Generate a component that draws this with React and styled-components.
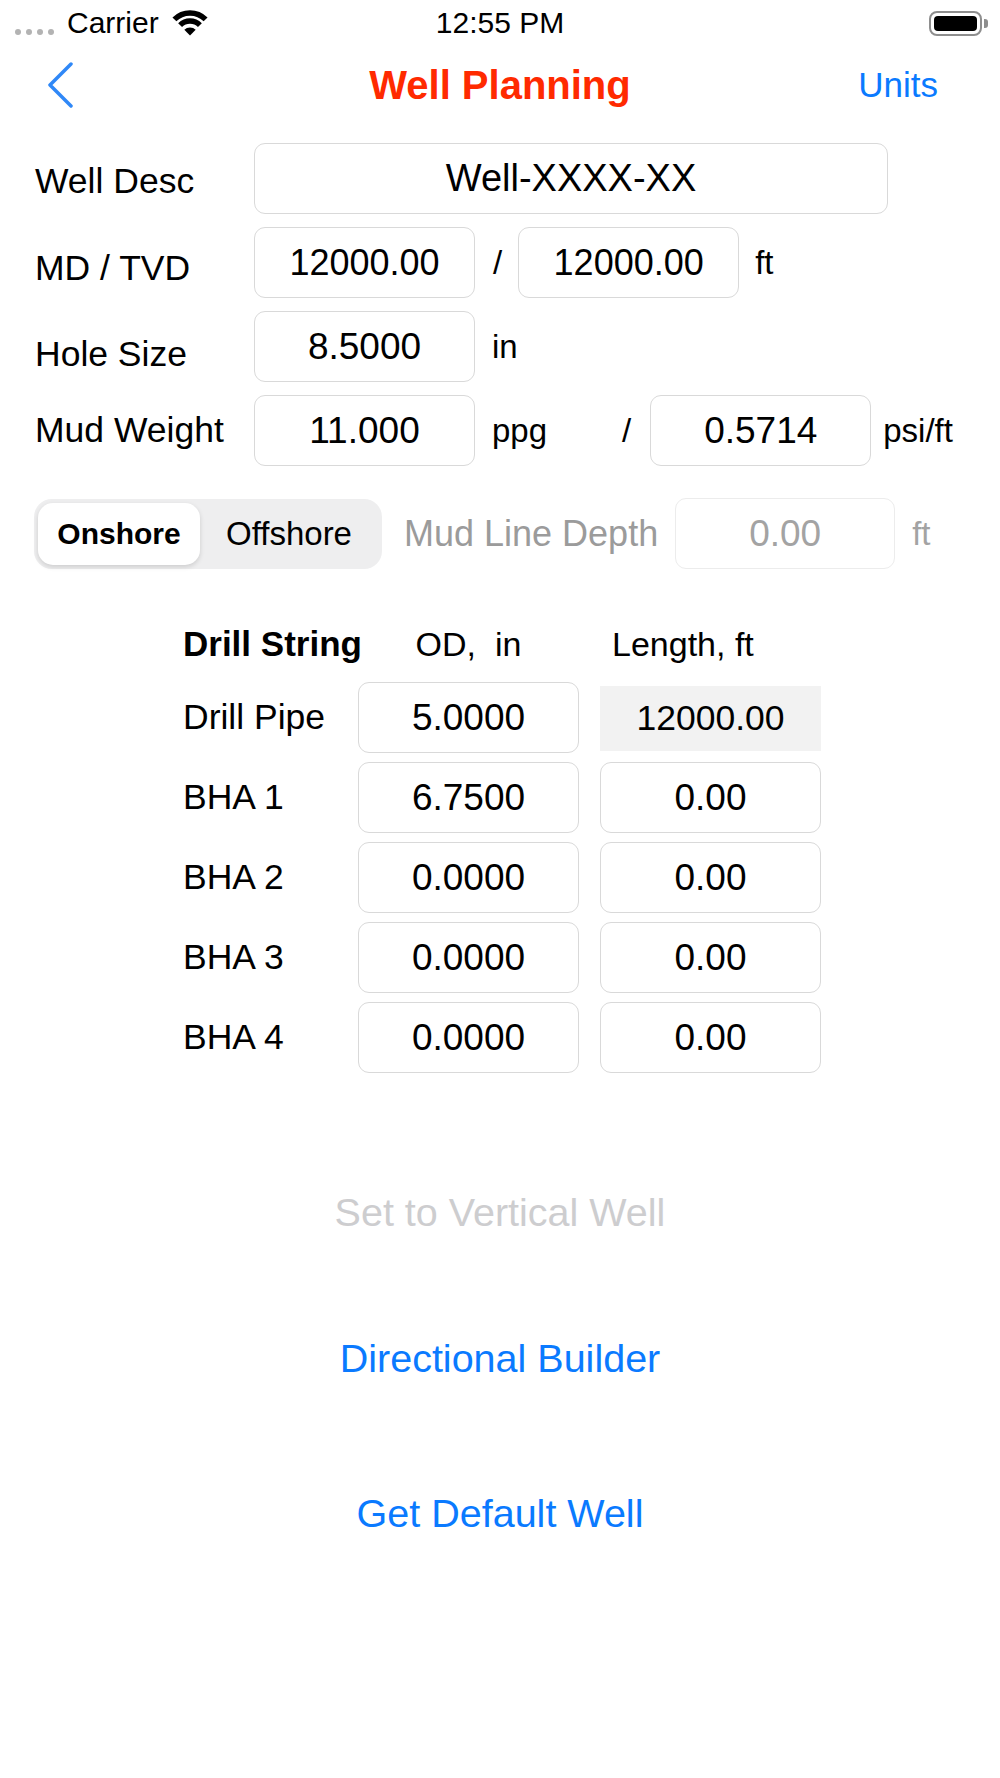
import React from "react";
import styled, { createGlobalStyle } from "styled-components";

const GlobalStyle = createGlobalStyle`
  html, body { margin: 0; padding: 0; background: #ffffff; }
  * { box-sizing: border-box; }
`;

const Page = styled.div`
  width: 1000px;
  min-height: 1778px;
  background: #ffffff;
  font-family: "Liberation Sans", Arial, Helvetica, sans-serif;
  color: #000000;
`;

/* ---------- status bar ---------- */
const StatusBar = styled.div`
  height: 46px;
  display: grid;
  grid-template-columns: 1fr auto 1fr;
  align-items: center;
`;

const StatusLeft = styled.div`
  display: flex;
  align-items: center;
  padding-left: 15px;
  height: 46px;
`;

const Dots = styled.div`
  display: flex;
  gap: 5px;
  align-self: flex-end;
  margin-bottom: 11px;
`;

const Dot = styled.span`
  width: 6px;
  height: 6px;
  border-radius: 50%;
  background: #b3b3b3;
`;

const Carrier = styled.span`
  font-size: 30px;
  margin-left: 13px;
  line-height: 46px;
`;

const WifiIcon = styled.svg`
  margin-left: 13px;
  width: 36px;
  height: 26px;
  display: block;
`;

const Clock = styled.span`
  font-size: 30px;
  line-height: 46px;
`;

const StatusRight = styled.div`
  display: flex;
  justify-content: flex-end;
  align-items: center;
  padding-right: 12px;
`;

const Battery = styled.div`
  width: 53px;
  height: 25px;
  border: 2.5px solid #8e8e8e;
  border-radius: 8px;
  padding: 3px;
  display: flex;
`;

const BatteryFill = styled.div`
  flex: 1;
  background: #000;
  border-radius: 4px;
`;

const BatteryNub = styled.div`
  width: 4px;
  height: 9px;
  margin-left: 2px;
  background: #8e8e8e;
  border-radius: 0 3px 3px 0;
`;

/* ---------- nav bar ---------- */
const NavBar = styled.div`
  height: 78px;
  display: grid;
  grid-template-columns: 1fr auto 1fr;
  align-items: center;
`;

const BackButton = styled.button`
  justify-self: start;
  margin-left: 46px;
  background: none;
  border: 0;
  padding: 0;
  display: flex;
  align-items: center;
`;

const Title = styled.h1`
  margin: 0;
  font-size: 40px;
  font-weight: 700;
  color: #ff2a00;
  line-height: 78px;
`;

const NavAction = styled.button`
  justify-self: end;
  margin-right: 62px;
  background: none;
  border: 0;
  padding: 0;
  font-family: inherit;
  font-size: 35px;
  color: #0a7aff;
  line-height: 78px;
`;

/* ---------- form ---------- */
const Form = styled.div`
  padding: 19px 0 0 35px;
  display: flex;
  flex-direction: column;
  gap: 13px;
`;

const Row = styled.div`
  display: flex;
  align-items: center;
  height: 71px;
`;

const Label = styled.span`
  width: 219px;
  flex: none;
  font-size: 35.5px;
  white-space: nowrap;
  padding-top: ${(p) => (p.$shift || 0) * 2}px;
`;

const Field = styled.div`
  flex: none;
  width: ${(p) => p.$w || 221}px;
  height: 71px;
  margin-left: ${(p) => p.$ml || 0}px;
  border: 1px solid ${(p) => (p.$muted ? "#ececec" : "#d9d9d9")};
  border-radius: 11px;
  background: #ffffff;
  display: flex;
  align-items: center;
  justify-content: center;
  font-size: ${(p) => p.$size || 37}px;
  color: ${(p) => (p.$muted ? "#a3a3a3" : "#000000")};
  white-space: nowrap;
`;

const Unit = styled.span`
  flex: none;
  font-size: ${(p) => p.$size || 33}px;
  margin-left: ${(p) => p.$ml || 0}px;
  color: ${(p) => (p.$muted ? "#a3a3a3" : "#000000")};
  white-space: nowrap;
`;

/* ---------- onshore / offshore ---------- */
const OptionsRow = styled.div`
  display: flex;
  align-items: center;
  height: 71px;
  margin-top: 32px;
  padding-left: 34px;
`;

const Segmented = styled.div`
  flex: none;
  width: 348px;
  height: 70px;
  padding: 4px;
  border-radius: 18px;
  background: #eeeeef;
  display: grid;
  grid-template-columns: 162px 1fr;
`;

const SegItem = styled.div`
  display: flex;
  align-items: center;
  justify-content: center;
  border-radius: 15px;
  font-size: ${(p) => (p.$active ? 30 : 33)}px;
  font-weight: ${(p) => (p.$active ? 700 : 400)};
  background: ${(p) => (p.$active ? "#ffffff" : "transparent")};
  box-shadow: ${(p) => (p.$active ? "0 2px 5px rgba(0,0,0,0.14)" : "none")};
`;

const MutedLabel = styled.span`
  flex: none;
  margin-left: 22px;
  font-size: 36px;
  color: #9b9b9b;
  white-space: nowrap;
`;

/* ---------- drill string table ---------- */
const Table = styled.div`
  margin: 46px 0 0 183px;
  display: grid;
  grid-template-columns: 154px 221px 221px;
  grid-template-rows: 58px repeat(5, 71px);
  column-gap: 21px;
  row-gap: 9px;
`;

const HeadCell = styled.div`
  align-self: center;
  font-size: ${(p) => (p.$bold ? 35 : 34)}px;
  font-weight: ${(p) => (p.$bold ? 700 : 400)};
  text-align: ${(p) => p.$align || "left"};
  padding-left: ${(p) => p.$pl || 0}px;
  white-space: pre;
`;

const RowLabel = styled.div`
  align-self: center;
  font-size: 35.5px;
  white-space: nowrap;
`;

const ReadOnlyCell = styled.div`
  margin: 4px 0 2px;
  background: #f2f2f2;
  display: flex;
  align-items: center;
  justify-content: center;
  font-size: 35.5px;
`;

/* ---------- action buttons ---------- */
const Actions = styled.div`
  margin-top: 109px;
  display: flex;
  flex-direction: column;
  align-items: center;
`;

const LinkButton = styled.button`
  height: 60px;
  margin-top: ${(p) => p.$mt || 0}px;
  background: none;
  border: 0;
  padding: 0;
  font-family: inherit;
  font-size: 39.5px;
  line-height: 60px;
  color: ${(p) => (p.disabled ? "#cdcdcf" : "#0a7aff")};
`;

const rows = [
  { name: "Drill Pipe", od: "5.0000", len: "12000.00", fixed: true },
  { name: "BHA 1", od: "6.7500", len: "0.00" },
  { name: "BHA 2", od: "0.0000", len: "0.00" },
  { name: "BHA 3", od: "0.0000", len: "0.00" },
  { name: "BHA 4", od: "0.0000", len: "0.00" },
];

export default function App() {
  return (
    <Page>
      <GlobalStyle />
      <StatusBar>
        <StatusLeft>
          <Dots>
            <Dot />
            <Dot />
            <Dot />
            <Dot />
          </Dots>
          <Carrier>Carrier</Carrier>
          <WifiIcon viewBox="0 0 36 26">
            <path d="M2.4 9.4 A22 22 0 0 1 33.6 9.4" fill="none" stroke="#000" strokeWidth="5.5" />
            <path d="M8.1 15.1 A14 14 0 0 1 27.9 15.1" fill="none" stroke="#000" strokeWidth="5.5" />
            <path d="M18 25.5 L12.3 19.8 A8 8 0 0 1 23.7 19.8 Z" fill="#000" />
          </WifiIcon>
        </StatusLeft>
        <Clock>12:55 PM</Clock>
        <StatusRight>
          <Battery>
            <BatteryFill />
          </Battery>
          <BatteryNub />
        </StatusRight>
      </StatusBar>

      <NavBar>
        <BackButton aria-label="Back">
          <svg width="30" height="46" viewBox="0 0 30 46">
            <path d="M25 2 L4 23 L25 44" fill="none" stroke="#2f88f7" strokeWidth="3.5" strokeLinecap="round" strokeLinejoin="round" />
          </svg>
        </BackButton>
        <Title>Well Planning</Title>
        <NavAction>Units</NavAction>
      </NavBar>

      <Form>
        <Row>
          <Label $shift={3}>Well Desc</Label>
          <Field $w={634} $size={38}>Well-XXXX-XX</Field>
        </Row>
        <Row>
          <Label $shift={6}>MD / TVD</Label>
          <Field $size={36}>12000.00</Field>
          <Unit $ml={18}>/</Unit>
          <Field $ml={16} $size={36}>12000.00</Field>
          <Unit $ml={16}>ft</Unit>
        </Row>
        <Row>
          <Label $shift={8}>Hole Size</Label>
          <Field>8.5000</Field>
          <Unit $ml={17}>in</Unit>
        </Row>
        <Row>
          <Label>Mud Weight</Label>
          <Field>11.000</Field>
          <Unit $ml={17}>ppg</Unit>
          <Unit $ml={75}>/</Unit>
          <Field $ml={19}>0.5714</Field>
          <Unit $ml={12}>psi/ft</Unit>
        </Row>
      </Form>

      <OptionsRow>
        <Segmented>
          <SegItem $active>Onshore</SegItem>
          <SegItem>Offshore</SegItem>
        </Segmented>
        <MutedLabel>Mud Line Depth</MutedLabel>
        <Field $ml={17} $w={220} $muted>0.00</Field>
        <Unit $ml={17} $muted>ft</Unit>
      </OptionsRow>

      <Table>
        <HeadCell $bold>Drill String</HeadCell>
        <HeadCell $align="center">{"OD,  in"}</HeadCell>
        <HeadCell $pl={12}>Length, ft</HeadCell>
        {rows.map((r) => (
          <React.Fragment key={r.name}>
            <RowLabel>{r.name}</RowLabel>
            <Field>{r.od}</Field>
            {r.fixed ? <ReadOnlyCell>{r.len}</ReadOnlyCell> : <Field>{r.len}</Field>}
          </React.Fragment>
        ))}
      </Table>

      <Actions>
        <LinkButton disabled>Set to Vertical Well</LinkButton>
        <LinkButton $mt={86}>Directional Builder</LinkButton>
        <LinkButton $mt={95}>Get Default Well</LinkButton>
      </Actions>
    </Page>
  );
}
